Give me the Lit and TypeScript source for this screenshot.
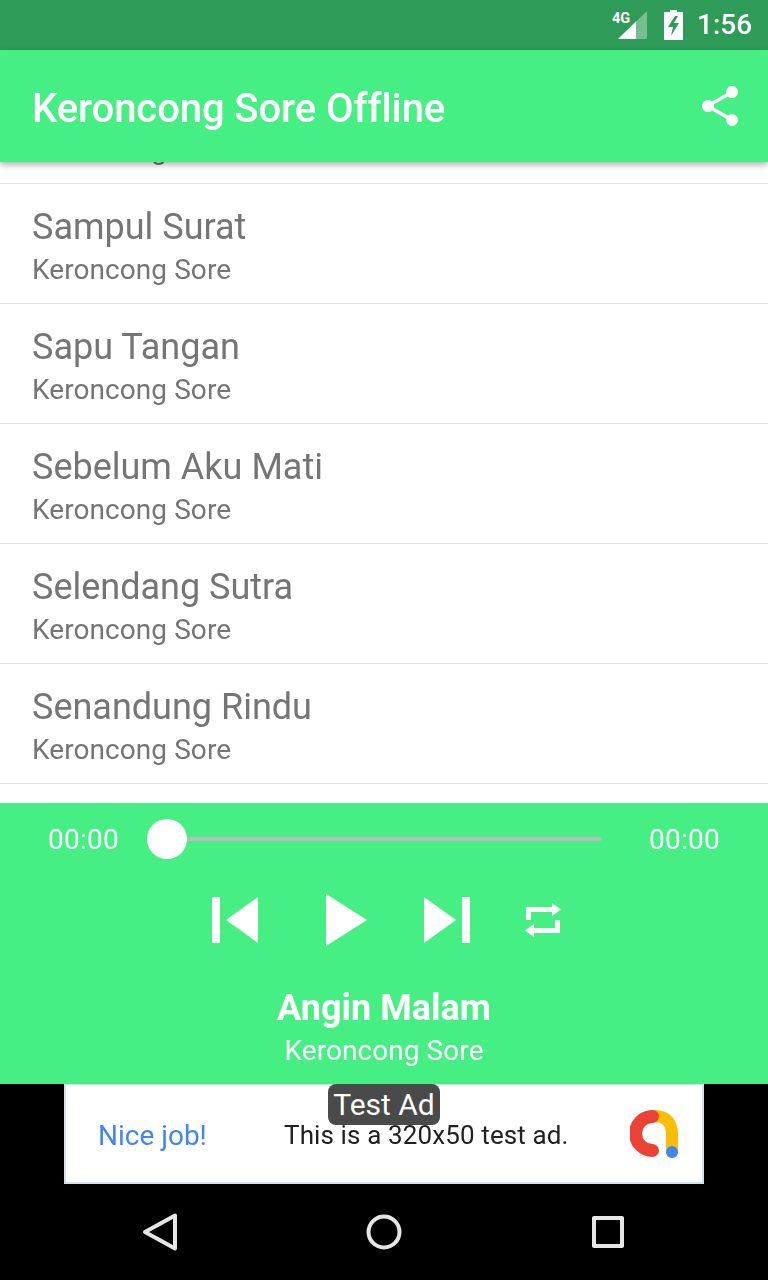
import { LitElement, html, css } from "lit";
import { customElement } from "lit/decorators.js";

const ROWS = ["Salah Tafsir", "Sampul Surat", "Sapu Tangan", "Sebelum Aku Mati", "Selendang Sutra", "Senandung Rindu"];

@customElement("app-root")
export class AppRoot extends LitElement {
  static styles = css`
    :host { display: block; width: 768px; height: 1280px; font-family: Roboto, "Liberation Sans", sans-serif; background: #fff; overflow: hidden; }
    .page { display: flex; flex-direction: column; height: 1280px; }
    .status { height: 50px; flex: none; background: #2f9b58; display: flex; align-items: center; color: #fff; padding-left: 612px; box-sizing: border-box; }
    .status svg { display: block; flex: none; }
    .signal { margin-right: 16px; }
    .battery { margin-right: 13px; }
    .time { font-size: 28px; font-weight: 500; line-height: 50px; will-change: opacity; }
    .bar { height: 112px; flex: none; background: #46ef84; display: flex; align-items: center; justify-content: space-between; padding: 0 24px 0 32px; color: #fff; box-shadow: 0 3px 6px rgba(0,0,0,.3); position: relative; z-index: 2; }
    .bar h1 { margin: 4px 0 0; font-size: 40px; font-weight: 500; letter-spacing: -.09px; will-change: opacity; }
    .list { flex: 1; min-height: 0; overflow: hidden; background: #fff; }
    .rows { margin-top: -98px; }
    .row { height: 120px; box-sizing: border-box; border-bottom: 1px solid #e0e0e0; padding: 22px 32px 0; color: #757575; }
    .title { font-size: 36px; line-height: 42px; will-change: opacity; }
    .sub { font-size: 28px; line-height: 43px; letter-spacing: .07px; will-change: opacity; }
    .player { height: 281px; flex: none; background: #46ef84; color: #fff; display: flex; flex-direction: column; }
    .seek { height: 72px; display: flex; align-items: center; padding: 0 48px; }
    .seek span { font-size: 28px; flex: none; width: 71px; letter-spacing: .25px; will-change: opacity; }
    .seek span:last-child { text-align: right; }
    .track { flex: 1; height: 4px; background: #b9bdb9; margin: 0 48px 0 28px; position: relative; }
    .thumb { position: absolute; left: 0; top: -18px; width: 40px; height: 40px; border-radius: 50%; background: #fff; }
    .ctrl { display: flex; align-items: center; height: 90px; padding-left: 212px; }
    .ctrl svg { display: block; flex: none; }
    .g1 { margin-left: 68px; } .g2 { margin-left: 57px; } .g3 { margin-left: 55px; }
    .now { text-align: center; padding-top: 22px; will-change: opacity; }
    .now b { display: block; font-size: 36px; font-weight: 700; line-height: 42px; }
    .now span { display: block; font-size: 28px; line-height: 44px; letter-spacing: .07px; }
    .adwrap { height: 100px; flex: none; background: #000; display: flex; justify-content: center; position: relative; }
    .ad { width: 640px; box-sizing: border-box; background: #fff; border: 2px solid #d6e0e6; border-top-width: 1px; display: flex; align-items: center; padding: 0 22px 0 32px; font-size: 26px; position: relative; }
    .nice { color: #4285f4; font-size: 28px; width: 186px; flex: none; margin-top: 3px; will-change: opacity; }
    .msg { color: #212121; flex: 1; letter-spacing: .12px; margin-top: 3px; will-change: opacity; }
    .logo { display: block; flex: none; }
    .badge { position: absolute; left: 262px; top: -1px; height: 41px; width: 112px; box-sizing: border-box; background: #4a4a4a; color: #fff; border-radius: 8px; font-size: 30px; line-height: 41px; text-align: center; will-change: opacity; }
    .nav { height: 96px; flex: none; background: #000; display: flex; align-items: center; }
    .nav svg { display: block; flex: none; }
    .n1 { margin-left: 139px; } .n2 { margin-left: 187px; } .n3 { margin-left: 190px; }
  `;

  render() {
    return html`<div class="page">
      <div class="status">
        <svg class="signal" width="36" height="36" viewBox="0 0 36 36">
          <text x="0" y="16" font-size="14.500" font-weight="700" font-family="Roboto" fill="#fff">4G</text>
          <path d="M35 4V32H6Z" fill="#fff" fill-opacity=".35"/>
          <path d="M24 14.500V32H6Z" fill="#fff"/>
        </svg>
        <svg class="battery" width="20" height="30" viewBox="0 0 20 30">
          <path fill="#fff" fill-rule="evenodd" d="M6 0h7v2h6v28H0V2h6ZM11 6 4 17h5l-2 9 8-13h-5l4-7Z"/>
        </svg>
        <span class="time">1:56</span>
      </div>
      <div class="bar">
        <h1>Keroncong Sore Offline</h1>
        <svg width="48" height="48" viewBox="0 0 24 24" fill="#fff"><path d="M18 16.08c-.76 0-1.44.3-1.96.77L8.91 12.7c.05-.23.09-.46.09-.7s-.04-.47-.09-.7l7.05-4.11c.54.5 1.25.81 2.04.81 1.66 0 3-1.34 3-3s-1.34-3-3-3-3 1.34-3 3c0 .24.04.47.09.7L8.04 9.81C7.5 9.31 6.79 9 6 9c-1.66 0-3 1.34-3 3s1.34 3 3 3c.79 0 1.5-.31 2.04-.81l7.12 4.16c-.05.21-.08.43-.08.65 0 1.61 1.31 2.92 2.92 2.92 1.61 0 2.92-1.31 2.92-2.92s-1.31-2.92-2.92-2.92z"/></svg>
      </div>
      <div class="list"><div class="rows">
        ${ROWS.map((t) => html`<div class="row"><div class="title">${t}</div><div class="sub">Keroncong Sore</div></div>`)}
      </div></div>
      <div class="player">
        <div class="seek"><span>00:00</span><div class="track"><div class="thumb"></div></div><span>00:00</span></div>
        <div class="ctrl">
          <svg width="46" height="46" viewBox="0 0 46 46" fill="#fff"><path d="M0 0h8v46H0ZM46 0v46L14 23Z"/></svg>
          <svg class="g1" width="41" height="52" viewBox="0 0 41 52" fill="#fff"><path d="M0 0 41 26 0 52Z"/></svg>
          <svg class="g2" width="46" height="46" viewBox="0 0 46 46" fill="#fff"><path d="M0 0 32 23 0 46ZM38 0h8v46h-8Z"/></svg>
          <svg class="g3" width="36" height="34" viewBox="0 0 36 34" fill="#fff"><path d="M1 4H27V0L36 6.500 27 13V9H6V17H1ZM35 30H9V34L0 27.500 9 21V25H30V17H35Z"/></svg>
        </div>
        <div class="now"><b>Angin Malam</b><span>Keroncong Sore</span></div>
      </div>
      <div class="adwrap">
        <div class="ad">
          <span class="nice">Nice job!</span>
          <span class="msg">This is a 320x50 test ad.</span>
          <svg class="logo" width="50" height="49" viewBox="0 0 50 49" fill="none">
            <path d="M22 7H25C36 7 42 14 42 25V43" stroke="#fbbc04" stroke-width="12" stroke-linecap="round"/>
            <path d="M22.500 7.500A17 17 0 1 0 22.500 41.500" stroke="#ea4335" stroke-width="13" stroke-linecap="round"/>
            <circle cx="42" cy="43" r="6" fill="#4285f4"/>
          </svg>
          <div class="badge">Test Ad</div>
        </div>
      </div>
      <div class="nav">
        <svg class="n1" width="40" height="40" viewBox="0 0 40 40" fill="none" stroke="#e6e6e6" stroke-width="4" stroke-linejoin="round"><path d="M36 3.500V36.500L6 20Z"/></svg>
        <svg class="n2" width="36" height="36" viewBox="0 0 36 36" fill="none" stroke="#e6e6e6" stroke-width="4"><circle cx="18" cy="18" r="15.500"/></svg>
        <svg class="n3" width="32" height="32" viewBox="0 0 32 32" fill="none" stroke="#e6e6e6" stroke-width="4" stroke-linejoin="round"><rect x="2" y="2" width="28" height="28"/></svg>
      </div>
    </div>`;
  }
}
